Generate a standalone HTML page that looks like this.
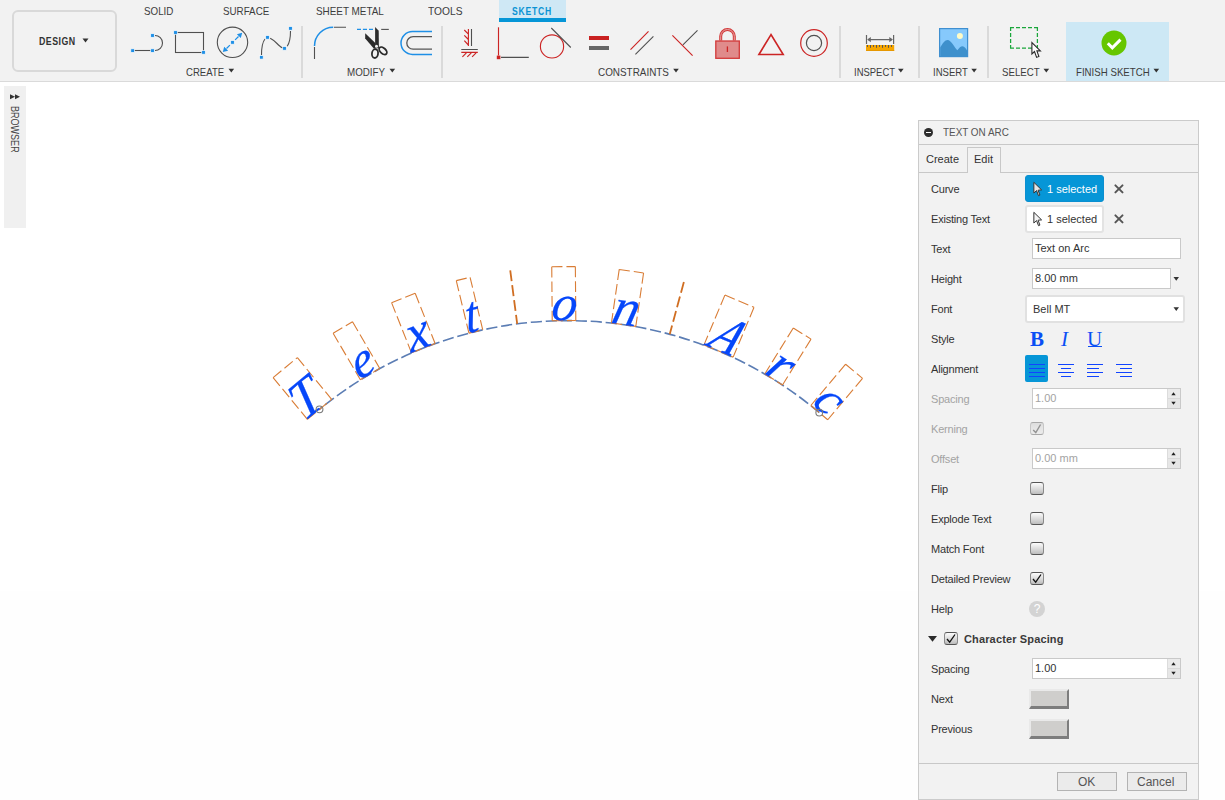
<!DOCTYPE html>
<html><head><meta charset="utf-8">
<style>
*{margin:0;padding:0;box-sizing:border-box}
html,body{width:1225px;height:800px;overflow:hidden;background:#fff;font-family:"Liberation Sans",sans-serif;}
.a{position:absolute;white-space:nowrap}
#tb{position:absolute;left:0;top:0;width:1225px;height:81px;background:#f2f2f2;border-bottom:1px solid #dadada;box-sizing:content-box}
.tl{position:absolute;font-size:11px;line-height:12px;color:#3c3c3c;transform-origin:0 0;white-space:nowrap}
.lb{position:absolute;font-size:11px;line-height:12px;color:#333;white-space:nowrap}
.dis{color:#a3a3a3}
.inp{position:absolute;background:#fff;border:1px solid #c9c9c9}
.spin{position:absolute;right:0;top:0;width:13px;height:19px;background:linear-gradient(#ebebeb 0,#ebebeb 9px,#d9d9d9 9px,#d9d9d9 10px,#e6e6e6 10px);border-left:1px solid #dcdcdc}
.cb{position:absolute;width:14px;height:13px;border-radius:3px;border:1px solid #555;border-left-color:#8a8a8a;border-right-color:#8a8a8a;background:linear-gradient(#fcfcfc,#bdbdbd)}
.btn3d{position:absolute;width:40px;height:20px;background:#cfcecc;border-top:2px solid #e9e9e9;border-left:2px solid #e9e9e9;border-right:2px solid #7d7d7d;border-bottom:3px solid #7d7d7d}
</style></head><body>
<div class="a" style="left:0;top:591px;width:1225px;height:209px;background:#fefefe"></div>
<div id="tb"></div>
<!-- DESIGN box -->
<div class="a" style="left:12px;top:10px;width:105px;height:62px;border:2px solid #d9d9d9;border-radius:6px"></div>
<div class="tl" style="left:39px;top:35px;font-weight:bold;color:#333;letter-spacing:.6px;transform:scaleX(.8)">DESIGN</div>
<svg class="a" style="left:0;top:0" width="1225" height="82" viewBox="0 0 1225 82">
<rect x="499" y="0" width="67" height="22" fill="#cfe8f5"/>
<rect x="499" y="18" width="67" height="4" fill="#0696d7"/>
<rect x="1066" y="22" width="103" height="59" fill="#cde8f5"/>
<g fill="#dadada"><rect x="301" y="26" width="2" height="52"/><rect x="441" y="26" width="2" height="52"/><rect x="839" y="26" width="2" height="52"/><rect x="918" y="26" width="2" height="52"/><rect x="987" y="26" width="2" height="52"/></g>
<g fill="#333"><path d="M82.5 38.5h6l-3 4z"/><path d="M228.5 68.8h5.6l-2.8 3.8z"/><path d="M389.5 68.8h5.6l-2.8 3.8z"/><path d="M673.2 68.8h5.6l-2.8 3.8z"/><path d="M898 68.8h5.6l-2.8 3.8z"/><path d="M971.3 68.8h5.6l-2.8 3.8z"/><path d="M1043.5 68.8h5.6l-2.8 3.8z"/><path d="M1153.5 68.8h5.6l-2.8 3.8z"/></g>
<!-- line/arc -->
<g fill="none" stroke="#505050" stroke-width="1.1">
<path d="M134 50.5H151"/><path d="M155 35.5A7.5 7.5 0 0 1 155 50.5"/>
<rect x="175.5" y="32.5" width="28" height="20"/>
<circle cx="232.5" cy="42.3" r="15.2"/>
<path d="M261.5 55C261.5 48 262.5 42 265 39M270.2 38.2C274 40 276 42.5 278.5 45C280.5 47 282 47.7 283.3 48M287.2 46.2C289.5 43 290.5 37 290.5 31"/>
</g>
<g fill="#1e8fe6" stroke="#fafafa" stroke-width="0.7">
<rect x="130.8" y="48.8" width="3.6" height="3.6"/><rect x="150.7" y="48.8" width="3.6" height="3.6"/><rect x="150.7" y="33.7" width="3.6" height="3.6"/>
<rect x="173.7" y="30.7" width="3.6" height="3.6"/><rect x="201.7" y="50.6" width="3.6" height="3.6"/>
<rect x="230.7" y="40.6" width="3.6" height="3.6"/>
<rect x="259.6" y="55.5" width="3.6" height="3.6"/><rect x="265.7" y="35.6" width="3.6" height="3.6"/><rect x="282.7" y="46.6" width="3.6" height="3.6"/><rect x="288.7" y="26.6" width="3.6" height="3.6"/>
</g>
<path d="M226.5 48.5L229.9 45.1M235.1 39.9L238.5 36.5" stroke="#1e8fe6" stroke-width="1.25"/>
<path d="M222.8 52.1L224.2 46.8 228.1 50.7zM242.2 32.8L236.9 34.2 240.8 38.1z" fill="#1e8fe6"/>
<!-- fillet -->
<path d="M314.5 47V59M334 27.3H346" stroke="#505050" stroke-width="1.1" fill="none"/>
<path d="M314.5 46A18.7 18.7 0 0 1 333.2 27.3" stroke="#1e8fe6" stroke-width="1.5" fill="none"/>
<!-- scissors -->
<path d="M357 29.4H361M362.9 29.4H367M369 29.4H373" stroke="#1e8fe6" stroke-width="1.3" fill="none"/>
<path d="M381.2 29.4H388.8" stroke="#505050" stroke-width="1.1" fill="none"/>
<path d="M375.1 27.1L378.7 30.7 378.9 48.3 375.1 48.3z" fill="#2b2b2b"/>
<path d="M365.2 33.2L375.3 43 375.6 48.6 373.8 48.6 365.2 38.4z" fill="#2b2b2b"/>
<circle cx="376.5" cy="46.3" r="1.5" fill="#f2f2f2"/>
<ellipse cx="375" cy="53.6" rx="3.05" ry="4.4" transform="rotate(7 375 53.6)" fill="none" stroke="#2b2b2b" stroke-width="1.8"/>
<ellipse cx="383" cy="50.8" rx="4.6" ry="2.7" transform="rotate(42 383 50.8)" fill="none" stroke="#2b2b2b" stroke-width="1.8"/>
<!-- offset -->
<path d="M432 31.6H412.4A11.4 11.4 0 0 0 412.4 54.4H432" stroke="#1e8fe6" stroke-width="1.5" fill="none"/>
<path d="M432 36.6H413.1A6.3 6.3 0 0 0 413.1 49.2H432" stroke="#555" stroke-width="1.3" fill="none"/>
<!-- fix -->
<g stroke="#cc2424" stroke-width="1.15" fill="none">
<path d="M468.4 29V46M464.3 30L468.4 34.2M464.3 35.3L468.4 39.5M464.3 40.6L468.4 45M461.3 52.4H477.8M462.4 56.9L466.4 52.9M467.3 56.9L471.3 52.9M472.1 56.9L476.1 52.9"/>
<path d="M498.5 27.3V55.5"/>
<circle cx="552" cy="46.4" r="11.6"/>
<path d="M630.5 49.6L648.5 31.4M672.4 35.4L692.6 55.6"/>
<path d="M771 34.6L758.9 54.5H783.2z" stroke-width="1.6" stroke-linejoin="miter"/>
<circle cx="814" cy="43" r="13.3" stroke-width="1.2"/>
</g>
<g stroke="#505050" stroke-width="1.1" fill="none">
<path d="M471.5 29V46M461.3 49.5H477.8M501 57.4H528.8M551.3 28L570.8 47.5"/>
<path d="M635.4 54.4L653.4 36.4M682.9 44.9L697.5 30.4" stroke-width="1.1"/>
<circle cx="814" cy="43" r="7.6" stroke-width="1.2"/>
</g>
<rect x="496.8" y="55.6" width="3.6" height="3.6" fill="#cc2424"/>
<rect x="589" y="36" width="20" height="4" fill="#c92121"/>
<rect x="589" y="46" width="20" height="4" fill="#666"/>
<!-- lock -->
<path d="M720.7 40.5V36.3A6.8 6.8 0 0 1 734.3 36.3V40.5" stroke="#d23a3a" stroke-width="3" fill="none"/>
<path d="M720.7 40.5V36.3A6.8 6.8 0 0 1 734.3 36.3V40.5" stroke="#e9a3a3" stroke-width="1" fill="none"/>
<rect x="715.8" y="41" width="23.5" height="17.3" fill="#e08b8b" stroke="#d23a3a" stroke-width="1.3"/>
<path d="M727.4 46.4V52" stroke="#cc2424" stroke-width="1.3"/>
<!-- measure -->
<g stroke="#666" stroke-width="1.2" fill="none"><path d="M866.5 35V44M893.6 35V44M868 39.6H892"/></g>
<path d="M867.2 39.6l3.6-2.6v5.2zM892.9 39.6l-3.6-2.6v5.2z" fill="#666"/>
<rect x="866" y="45" width="28.2" height="6" fill="#f5a500"/>
<rect x="866" y="50.2" width="28.2" height="0.8" fill="#e39400"/><g stroke="#555" stroke-width="1"><path d="M867.5 45V46.9M873.5 45V46.9M879.5 45V46.9M885.5 45V46.9M891.5 45V46.9M870.5 45V47.8M876.5 45V47.8M882.5 45V47.8M888.5 45V47.8"/></g>
<!-- image -->
<rect x="939.6" y="28.6" width="28" height="28" fill="#86c9fc" stroke="#3f8fd0" stroke-width="1.2"/>
<path d="M940.2 47.5C942.5 43.5 945 40 947.6 40C951 40 954.5 47.5 957.3 50.3C959.2 47.8 960.8 46.2 962.5 46.2C964.5 46.2 966 48.5 967 50.5V56.4H940.2z" fill="#3e90cc"/>
<circle cx="959.9" cy="35.9" r="3" fill="#fffbc6"/>
<!-- select -->
<path d="M1010 27.6H1038M1037.4 27H1037.4V48.7M1010 48.1H1038M1010.6 27V48.7" fill="none" stroke="#1aa63b" stroke-width="1.25" stroke-dasharray="4 2"/>
<path d="M1031.9 42.6V54L1034.5 51.5 1036.6 57.4 1038.9 56.5 1036.9 50.9 1040.4 50.9z" fill="#fff" stroke="#2a2a2a" stroke-width="1.1"/>
<!-- finish -->
<circle cx="1114" cy="43" r="12.5" fill="#66c600"/>
<path d="M1107.8 43.3L1112.3 47.8 1120.5 39.6" stroke="#fff" stroke-width="3" fill="none"/>
</svg>
<div class="tl" style="left:144px;top:5px;transform:scaleX(.89)">SOLID</div>
<div class="tl" style="left:223px;top:5px;transform:scaleX(.89)">SURFACE</div>
<div class="tl" style="left:316px;top:5px;transform:scaleX(.9)">SHEET METAL</div>
<div class="tl" style="left:428px;top:5px;transform:scaleX(.93)">TOOLS</div>
<div class="tl" style="left:512px;top:5px;color:#0a93d4;font-weight:bold;letter-spacing:1px;transform:scaleX(.78)">SKETCH</div>
<div class="tl" style="left:186px;top:66px;transform:scaleX(.87)">CREATE</div>
<div class="tl" style="left:347px;top:66px;transform:scaleX(.89)">MODIFY</div>
<div class="tl" style="left:598px;top:66px;transform:scaleX(.9)">CONSTRAINTS</div>
<div class="tl" style="left:854px;top:66px;transform:scaleX(.86)">INSPECT</div>
<div class="tl" style="left:933px;top:66px;transform:scaleX(.87)">INSERT</div>
<div class="tl" style="left:1002px;top:66px;transform:scaleX(.88)">SELECT</div>
<div class="tl" style="left:1076px;top:66px;transform:scaleX(.88)">FINISH SKETCH</div>


<!--ARC--><svg class="a" style="left:0;top:0" width="900" height="500" viewBox="0 0 900 500">
<path d="M319.52 409.33A390.672 390.672 0 0 1 819.28 412.61" fill="none" stroke="#5b7db4" stroke-width="1.6" stroke-dasharray="11.2 3.78" stroke-dashoffset="7.86"/>
<g fill="none" stroke="#d97d36" stroke-width="1.1" stroke-dasharray="10.7 4"><path d="M-15.70 -54H15.70M-15.70 -54V0M15.70 -54V0M-15.70 0H15.70" transform="translate(319.52 409.33) rotate(-39.39)"/><path d="M-11.25 -54H11.25M-11.25 -54V0M11.25 -54V0M-11.25 0H11.25" transform="translate(370.09 374.10) rotate(-30.34)"/><path d="M-12.70 -54H12.70M-12.70 -54V0M12.70 -54V0M-12.70 0H12.70" transform="translate(423.30 348.15) rotate(-21.65)"/><path d="M-7.10 -54H7.10M-7.10 -54V0M7.10 -54V0M-7.10 0H7.10" transform="translate(475.84 331.48) rotate(-13.56)"/><path d="M-11.80 -54H11.80M-11.80 -54V0M11.80 -54V0M-11.80 0H11.80" transform="translate(564.02 320.61) rotate(-0.50)"/><path d="M-12.30 -54H12.30M-12.30 -54V0M12.30 -54V0M-12.30 0H12.30" transform="translate(623.63 324.65) rotate(8.27)"/><path d="M-15.80 -54H15.80M-15.80 -54V0M15.80 -54V0M-15.80 0H15.80" transform="translate(718.57 351.01) rotate(22.76)"/><path d="M-10.45 -54H10.45M-10.45 -54V0M10.45 -54V0M-10.45 0H10.45" transform="translate(773.65 379.45) rotate(31.86)"/><path d="M-11.05 -54H11.05M-11.05 -54V0M11.05 -54V0M-11.05 0H11.05" transform="translate(819.28 412.61) rotate(40.14)"/></g>
<g fill="none" stroke="#d06e22" stroke-width="1.8" stroke-dasharray="11 4"><path d="M0 -54V0" transform="translate(517.18 323.84) rotate(-7.39)"/><path d="M0 -54V0" transform="translate(669.73 334.22) rotate(15.18)"/></g>
<g fill="#0647fa" stroke="#0647fa" stroke-width="0.25" font-family="Liberation Serif" font-style="italic" font-size="52" text-anchor="middle"><text transform="translate(319.52 409.33) rotate(-39.39) translate(-5.5 0) skewX(-6) scale(1 1.03)">T</text><text transform="translate(370.09 374.10) rotate(-30.34) translate(-1.8 0) skewX(-6) scale(.95 .95)">e</text><text transform="translate(423.30 348.15) rotate(-21.65) translate(-1.5 0) skewX(-6)">x</text><text transform="translate(475.84 331.48) rotate(-13.56) translate(-2.2 0) skewX(-6) scale(.92 1)">t</text><text transform="translate(564.02 320.61) rotate(-0.50) translate(-1 -0.8) skewX(-8) scale(.98 .95)">o</text><text transform="translate(623.63 324.65) rotate(8.27) translate(-0.7 0) skewX(-6)">n</text><text transform="translate(718.57 351.01) rotate(22.76) translate(-0.6 0) skewX(-15) scale(.85 1.04)">A</text><text transform="translate(773.65 379.45) rotate(31.86) translate(-2 0) skewX(-6)">r</text><text transform="translate(819.28 412.61) rotate(40.14) translate(-1.5 -1.5) skewX(-6) scale(.95 .95)">c</text></g>
<circle cx="319.52" cy="409.33" r="3.4" fill="none" stroke="#7a7a7a" stroke-width="1.1"/>
<circle cx="819.28" cy="412.61" r="3.4" fill="none" stroke="#7a7a7a" stroke-width="1.1"/>
</svg><!--/ARC-->
<!-- browser tab -->
<div class="a" style="left:4px;top:86px;width:22px;height:142px;background:#f0f0f0"></div>
<svg class="a" style="left:0;top:82px" width="30" height="30"><path d="M10 12.2L15 14.7 10 17.2zM15 12.2L20 14.7 15 17.2z" fill="#333"/></svg>
<div class="tl" style="left:20.5px;top:106px;font-size:10.5px;transform:rotate(90deg) scaleX(.86);color:#444">BROWSER</div>
<!-- panel -->
<div class="a" style="left:918px;top:120px;width:281px;height:680px;background:#f2f2f2;border:1px solid #cbcbcb"></div>
<div class="a" style="left:919px;top:144px;width:279px;height:1px;background:#c8c8c8"></div>
<div class="a" style="left:919px;top:172px;width:279px;height:1px;background:#c8c8c8"></div>
<div class="a" style="left:967px;top:147px;width:34px;height:26px;background:#f2f2f2;border:1px solid #c8c8c8;border-bottom:none"></div>
<div class="a" style="left:924px;top:128px;width:9px;height:9px;border-radius:50%;background:#2d2d2d"></div>
<div class="a" style="left:926px;top:132px;width:5px;height:1px;background:#fff"></div>
<div class="tl" style="left:943px;top:126px;color:#555;transform:scaleX(.9)">TEXT ON ARC</div>
<div class="lb" style="left:926px;top:153px">Create</div>
<div class="lb" style="left:974px;top:153px">Edit</div>
<div class="lb" style="left:931px;letter-spacing:-.2px;top:183px">Curve</div>
<div class="lb" style="left:931px;letter-spacing:-.2px;top:213px">Existing Text</div>
<div class="lb" style="left:931px;letter-spacing:-.2px;top:243px">Text</div>
<div class="lb" style="left:931px;letter-spacing:-.2px;top:273px">Height</div>
<div class="lb" style="left:931px;letter-spacing:-.2px;top:303px">Font</div>
<div class="lb" style="left:931px;letter-spacing:-.2px;top:333px">Style</div>
<div class="lb" style="left:931px;letter-spacing:-.2px;top:363px">Alignment</div>
<div class="lb dis" style="left:931px;letter-spacing:-.2px;top:393px">Spacing</div>
<div class="lb dis" style="left:931px;letter-spacing:-.2px;top:423px">Kerning</div>
<div class="lb dis" style="left:931px;letter-spacing:-.2px;top:453px">Offset</div>
<div class="lb" style="left:931px;letter-spacing:-.2px;top:483px">Flip</div>
<div class="lb" style="left:931px;letter-spacing:-.2px;top:513px">Explode Text</div>
<div class="lb" style="left:931px;letter-spacing:-.2px;top:543px">Match Font</div>
<div class="lb" style="left:931px;letter-spacing:-.2px;top:573px">Detailed Preview</div>
<div class="lb" style="left:931px;letter-spacing:-.2px;top:603px">Help</div>
<div class="lb" style="left:964px;top:633px;font-weight:bold;color:#3a3a3a;letter-spacing:.14px">Character Spacing</div>
<div class="lb" style="left:931px;letter-spacing:-.2px;top:663px">Spacing</div>
<div class="lb" style="left:931px;letter-spacing:-.2px;top:693px">Next</div>
<div class="lb" style="left:931px;letter-spacing:-.2px;top:723px">Previous</div>
<!-- controls -->
<div class="a" style="left:1025px;top:175px;width:79px;height:27px;background:#0696d7;border-radius:3px;border:1px solid #0b8fd0"></div>
<div class="lb" style="left:1047px;top:183px;color:#fff">1 selected</div>
<div class="a" style="left:1025px;top:205px;width:79px;height:28px;background:#fff;border:2px solid #e3e3e3;border-radius:3px"></div>
<div class="lb" style="left:1047px;top:213px">1 selected</div>
<svg class="a" style="left:1025px;top:170px" width="110" height="70">
<path d="M8.85 12.3V23L11.6 20.6 13.5 25.7 14.9 25.1 13.1 20.2 16.6 19.9z" fill="#e6e6e6" stroke="#333" stroke-width="1"/>
<path d="M8.85 42.3V53L11.6 50.6 13.5 55.7 14.9 55.1 13.1 50.2 16.6 49.9z" fill="#f4f4f4" stroke="#333" stroke-width="1"/>
<path d="M90.4 15.4L97.5 22.4M97.5 15.4L90.4 22.4M90.4 45.4L97.5 52.4M97.5 45.4L90.4 52.4" stroke="#555" stroke-width="2" stroke-linecap="round"/>
</svg>
<div class="inp" style="left:1032px;top:238px;width:149px;height:21px"></div>
<div class="lb" style="left:1035px;top:242px">Text on Arc</div>
<div class="inp" style="left:1032px;top:268px;width:139px;height:21px"></div>
<div class="lb" style="left:1035px;top:272px">8.00 mm</div>
<div class="a" style="left:1025px;top:295px;width:160px;height:28px;background:#fff;border:2px solid #e1e1e1;border-radius:3px"></div>
<div class="lb" style="left:1033px;top:303px">Bell MT</div>
<svg class="a" style="left:1160px;top:270px" width="30" height="50"><path d="M13.5 7h5.5l-2.75 3.7zM13.5 37.2h5.5l-2.75 3.7z" fill="#333"/></svg>
<div class="a" style="left:1030px;top:327px;font-family:'Liberation Serif',serif;font-weight:bold;font-size:21px;line-height:24px;color:#0a4ff5">B</div>
<div class="a" style="left:1061px;top:327px;font-family:'Liberation Serif',serif;font-style:italic;font-size:21px;line-height:24px;color:#0a4ff5">I</div>
<div class="a" style="left:1087px;top:327px;font-family:'Liberation Serif',serif;font-size:21px;line-height:24px;color:#0a4ff5">U</div>
<div class="a" style="left:1088px;top:346px;width:14px;height:1.3px;background:#0a4ff5"></div>
<div class="a" style="left:1025px;top:355px;width:23px;height:27px;background:#0696d7;border-radius:2px"></div>
<svg class="a" style="left:1020px;top:355px" width="120" height="30"><g stroke="#1144ff" stroke-width="1.2">
<path d="M9 9.5H25M9 13.5H25M9 17.5H25M9 21.5H25"/>
<path d="M38 9.5H54M41 13.5H51M38 17.5H54M41 21.5H51"/>
<path d="M67 9.5H83M67 13.5H79M67 17.5H83M67 21.5H79"/>
<path d="M96 9.5H112M100 13.5H112M96 17.5H112M100 21.5H112"/>
</g></svg>
<div class="inp" style="left:1032px;top:388px;width:149px;height:21px"><div class="spin"></div></div>
<div class="lb dis" style="left:1035px;top:392px">1.00</div>
<div class="inp" style="left:1032px;top:448px;width:149px;height:21px"><div class="spin"></div></div>
<div class="lb dis" style="left:1035px;top:452px">0.00 mm</div>
<div class="inp" style="left:1032px;top:658px;width:149px;height:21px"><div class="spin"></div></div>
<div class="lb" style="left:1035px;top:662px">1.00</div>
<svg class="a" style="left:1160px;top:380px" width="30" height="300"><g fill="#222">
<path d="M11.3 15.3h4.4l-2.2-3zM11.3 21.8h4.4l-2.2 3z"/>
<path d="M11.3 75.3h4.4l-2.2-3zM11.3 81.8h4.4l-2.2 3z"/>
<path d="M11.3 285.3h4.4l-2.2-3zM11.3 291.8h4.4l-2.2 3z"/>
</g></svg>
<div class="a" style="left:1030px;top:422px;width:14px;height:13px;border:1px solid #a8a8a8;border-left-color:#c6c6c6;border-right-color:#c6c6c6;border-radius:3px;background:linear-gradient(#dedede,#ececec)"></div>
<svg class="a" style="left:1030px;top:422px" width="14" height="13"><path d="M3.2 8L5.8 10.6 10.6 2.5" stroke="#939393" stroke-width="1.4" fill="none"/></svg>
<div class="cb" style="left:1030px;top:482px"></div>
<div class="cb" style="left:1030px;top:512px"></div>
<div class="cb" style="left:1030px;top:542px"></div>
<div class="cb" style="left:1030px;top:572px"></div>
<div class="cb" style="left:944px;top:632px"></div>
<svg class="a" style="left:1030px;top:572px" width="14" height="13"><path d="M3 7L5.7 10.2 11 2.5" stroke="#111" stroke-width="1.3" fill="none"/></svg>
<svg class="a" style="left:944px;top:632px" width="14" height="13"><path d="M3 7L5.7 10.2 11 2.5" stroke="#111" stroke-width="1.3" fill="none"/></svg>
<div class="a" style="left:1029px;top:601px;width:16px;height:16px;border-radius:50%;background:#d3d3d3;color:#fff;font-size:12px;line-height:16px;text-align:center">?</div>
<svg class="a" style="left:925px;top:630px" width="15" height="15"><path d="M3 6h9l-4.5 5.8z" fill="#2b2b2b"/></svg>
<div class="btn3d" style="left:1029px;top:689px"></div>
<div class="btn3d" style="left:1029px;top:719px"></div>
<div class="a" style="left:919px;top:763px;width:279px;height:1px;background:#c8c8c8"></div>
<div class="a" style="left:1057px;top:772px;width:60px;height:19px;background:#ebebeb;border:1px solid #b3b3b3"></div>
<div class="a" style="left:1127px;top:772px;width:60px;height:19px;background:#ebebeb;border:1px solid #b3b3b3"></div>
<div class="a" style="left:1078px;top:775px;font-size:12px;line-height:14px;color:#555">OK</div>
<div class="a" style="left:1137px;top:775px;font-size:12px;line-height:14px;color:#555">Cancel</div>
</body></html>
